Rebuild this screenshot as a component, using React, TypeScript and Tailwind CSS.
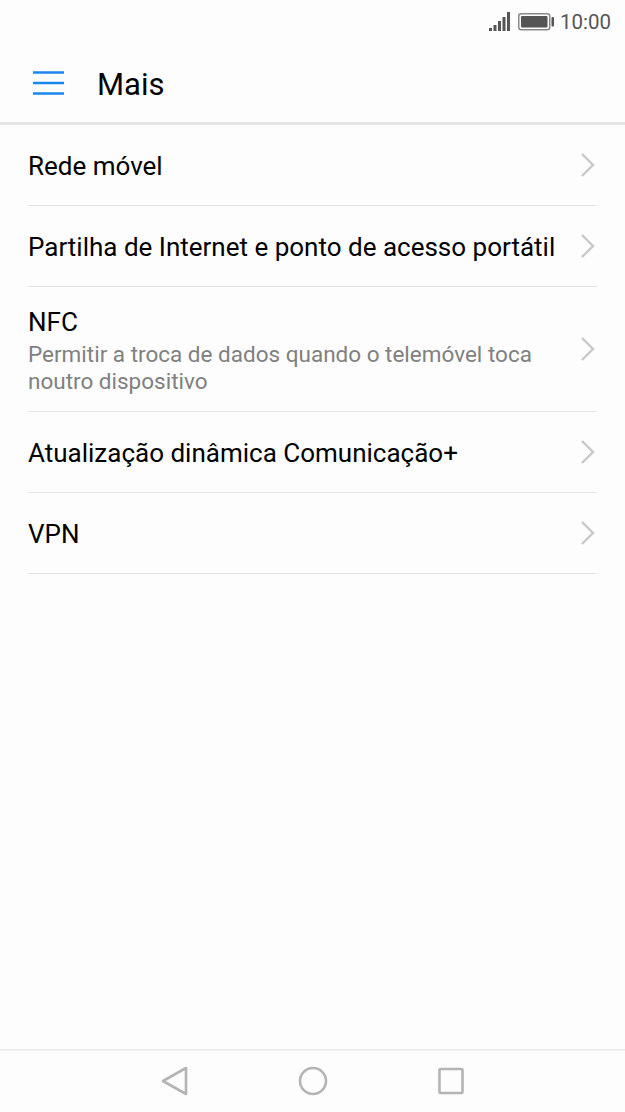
const rows = [
  { title: 'Rede móvel', height: 'h-[81px]' },
  { title: 'Partilha de Internet e ponto de acesso portátil', height: 'h-[81px]' },
  {
    title: 'NFC',
    subtitle: 'Permitir a troca de dados quando o telemóvel toca noutro dispositivo',
    height: 'h-[125px]',
  },
  { title: 'Atualização dinâmica Comunicação+', height: 'h-[81px]' },
  { title: 'VPN', height: 'h-[81px]' },
];

function Chevron() {
  return (
    <svg className="w-[16px] h-[24px] shrink-0" viewBox="0 0 16 24" fill="none" stroke="#c8c8c8" strokeWidth={2.4}>
      <path d="M1 1 L12 12 L1 23" />
    </svg>
  );
}

function StatusBar() {
  return (
    <div className="h-[44px] flex items-center justify-end pr-[14px] text-[#555555]">
      <svg className="w-[21px] h-[20px]" viewBox="0 0 21 20" fill="#555555">
        <rect x="0" y="16" width="3" height="3" />
        <rect x="4.5" y="13" width="3" height="6" />
        <rect x="9" y="9" width="3" height="10" />
        <rect x="13.5" y="5" width="3" height="14" />
        <rect x="18" y="0" width="3" height="19" />
      </svg>
      <svg className="w-[36px] h-[18px] ml-[8px]" viewBox="0 0 36 18" fill="none">
        <rect x="0.75" y="0.75" width="31" height="16" rx="2.5" stroke="#8a8a8a" strokeWidth={1.5} />
        <rect x="3" y="3" width="26.5" height="11.5" rx="1" fill="#555555" />
        <rect x="33.5" y="4" width="2.5" height="9.5" rx="1" fill="#555555" />
      </svg>
      <span className="ml-[6px] text-[20.5px] leading-none">10:00</span>
    </div>
  );
}

function Header() {
  return (
    <div className="h-[81px] flex items-center pl-[33px] border-b-[3px] border-[#e6e6e6]">
      <svg className="w-[31px] h-[24px]" viewBox="0 0 31 24" fill="none" stroke="#1a86ee" strokeWidth={2.4}>
        <path d="M0 1.5 H31 M0 12 H31 M0 22.5 H31" />
      </svg>
      <span className="ml-[33px] mt-[3px] text-[31px] leading-none text-black">Mais</span>
    </div>
  );
}

function NavBar() {
  return (
    <div className="h-[63px] border-t-2 border-[#eeeeee] flex items-start justify-center pt-[14px] gap-[108px]">
      <svg className="w-[30px] h-[32px]" viewBox="0 0 30 32" fill="none" stroke="#b4b4b4" strokeWidth={2.6} strokeLinejoin="round">
        <path d="M3 16 L26 3 V29 Z" />
      </svg>
      <svg className="w-[30px] h-[32px]" viewBox="0 0 30 32" fill="none" stroke="#b4b4b4" strokeWidth={2.6}>
        <circle cx="15" cy="16" r="13" />
      </svg>
      <svg className="w-[30px] h-[32px]" viewBox="0 0 30 32" fill="none" stroke="#b4b4b4" strokeWidth={2.6} strokeLinejoin="round">
        <rect x="3.5" y="4" width="23" height="24" rx="1" />
      </svg>
    </div>
  );
}

export default function App() {
  return (
    <div className="w-[625px] h-[1112px] bg-[#fdfdfd] flex flex-col font-['Roboto',sans-serif]">
      <StatusBar />
      <Header />
      <div className="flex-1 px-[28px]">
        {rows.map((row) => (
          <div key={row.title} className={`${row.height} flex items-center border-b border-[#e4e4e4]`}>
            <div className="flex-1 min-w-0 pt-[2px]">
              <div className="text-[26px] leading-[32px] text-black whitespace-nowrap">{row.title}</div>
              {row.subtitle && (
                <div className="mt-[3px] text-[22.5px] leading-[27px] text-[#808080] pr-[20px]">{row.subtitle}</div>
              )}
            </div>
            <Chevron />
          </div>
        ))}
      </div>
      <NavBar />
    </div>
  );
}
